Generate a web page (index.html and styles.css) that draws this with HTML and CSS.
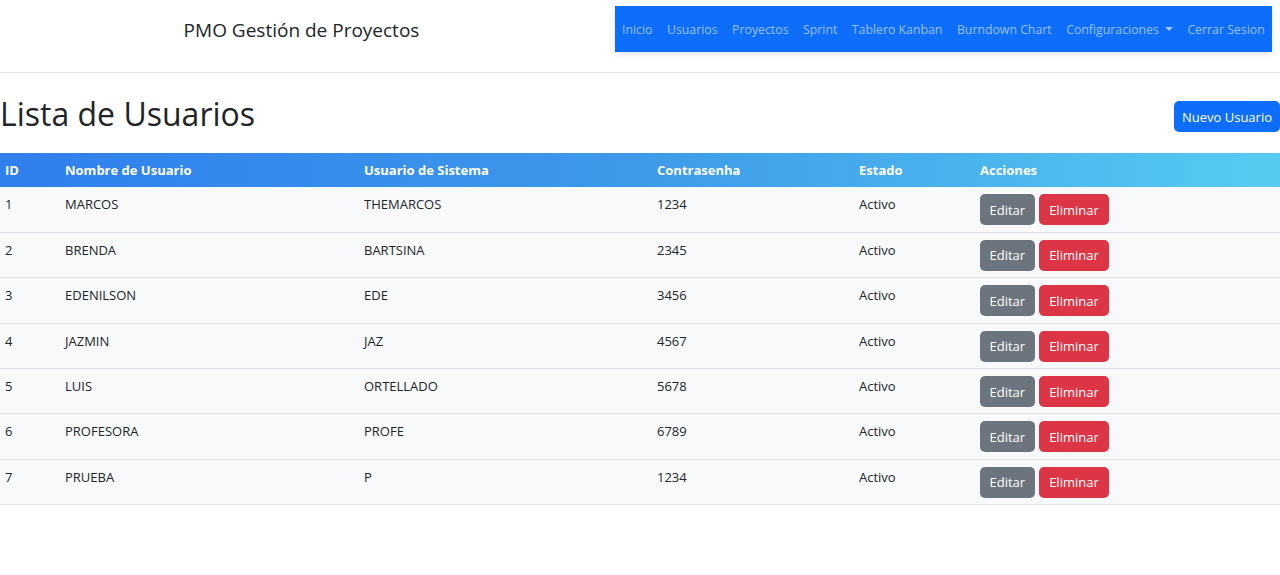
FILE: index.html
```html
<!DOCTYPE html>
<html lang="es">
<head>
<meta charset="utf-8">
<title>PMO Gestión de Proyectos</title>
<link rel="stylesheet" href="styles.css">
</head>
<body>
<header class="topbar">
  <div class="brand">PMO Gestión de Proyectos</div>
  <nav class="navbox">
    <a class="nav-link" href="#">Inicio</a>
    <a class="nav-link" href="#">Usuarios</a>
    <a class="nav-link" href="#">Proyectos</a>
    <a class="nav-link" href="#">Sprint</a>
    <a class="nav-link" href="#">Tablero Kanban</a>
    <a class="nav-link" href="#">Burndown Chart</a>
    <a class="nav-link dropdown" href="#">Configuraciones<span class="caret"></span></a>
    <a class="nav-link" href="#">Cerrar Sesion</a>
  </nav>
</header>
<main class="content">
  <div class="title-row">
    <h1 class="title">Lista de Usuarios</h1>
    <button class="btn btn-primary">Nuevo Usuario</button>
  </div>
  <table class="users">
    <colgroup>
      <col class="c-id"><col class="c-name"><col class="c-user"><col class="c-pass"><col class="c-state"><col class="c-actions">
    </colgroup>
    <thead>
      <tr><th>ID</th><th>Nombre de Usuario</th><th>Usuario de Sistema</th><th>Contrasenha</th><th>Estado</th><th>Acciones</th></tr>
    </thead>
    <tbody>
      <tr><td>1</td><td>MARCOS</td><td>THEMARCOS</td><td>1234</td><td>Activo</td><td class="actions"><button class="btn btn-gray">Editar</button><button class="btn btn-red">Eliminar</button></td></tr>
      <tr><td>2</td><td>BRENDA</td><td>BARTSINA</td><td>2345</td><td>Activo</td><td class="actions"><button class="btn btn-gray">Editar</button><button class="btn btn-red">Eliminar</button></td></tr>
      <tr><td>3</td><td>EDENILSON</td><td>EDE</td><td>3456</td><td>Activo</td><td class="actions"><button class="btn btn-gray">Editar</button><button class="btn btn-red">Eliminar</button></td></tr>
      <tr><td>4</td><td>JAZMIN</td><td>JAZ</td><td>4567</td><td>Activo</td><td class="actions"><button class="btn btn-gray">Editar</button><button class="btn btn-red">Eliminar</button></td></tr>
      <tr><td>5</td><td>LUIS</td><td>ORTELLADO</td><td>5678</td><td>Activo</td><td class="actions"><button class="btn btn-gray">Editar</button><button class="btn btn-red">Eliminar</button></td></tr>
      <tr><td>6</td><td>PROFESORA</td><td>PROFE</td><td>6789</td><td>Activo</td><td class="actions"><button class="btn btn-gray">Editar</button><button class="btn btn-red">Eliminar</button></td></tr>
      <tr><td>7</td><td>PRUEBA</td><td>P</td><td>1234</td><td>Activo</td><td class="actions"><button class="btn btn-gray">Editar</button><button class="btn btn-red">Eliminar</button></td></tr>
    </tbody>
  </table>
</main>
</body>
</html>
```
FILE: styles.css
```css
* { box-sizing: border-box; }
html, body { margin: 0; padding: 0; }
body {
  font-family: "Segoe UI", "Open Sans", "Noto Sans", sans-serif;
  color: #212529;
  background: #fff;
  font-size: 13px;
}
.topbar {
  display: flex;
  align-items: flex-start;
  height: 73px;
  border-bottom: 1px solid #e3e5e8;
}
.brand {
  width: 603px;
  text-align: center;
  font-size: 19px;
  line-height: 26px;
  padding-top: 17px;
  color: #212529;
}
.navbox {
  margin-top: 6px;
  margin-left: 12px;
  width: 657px;
  height: 46px;
  background: #0d6efd;
  display: flex;
  align-items: center;
  gap: 14.5px;
  padding: 0 6px 0 7px;
  box-shadow: 0 2px 6px rgba(0,0,0,0.12);
}
.nav-link {
  color: rgba(255,255,255,0.58);
  text-decoration: none;
  font-size: 12.3px;
  white-space: nowrap;
}
.caret {
  display: inline-block;
  margin-left: 6px;
  vertical-align: 3px;
  border-top: 4px solid rgba(255,255,255,0.6);
  border-left: 4px solid transparent;
  border-right: 4px solid transparent;
}
.title-row {
  display: flex;
  justify-content: space-between;
  align-items: flex-start;
  padding-top: 21px;
  height: 80px;
}
.title {
  margin: 0;
  font-size: 32px;
  font-weight: 500;
  line-height: 40px;
}
.btn {
  font-family: inherit;
  border: none;
  border-radius: 5px;
  color: #fff;
  cursor: pointer;
}
.btn-primary {
  background: #0d6efd;
  font-size: 13px;
  height: 31px;
  padding: 0 8px;
  margin-top: 7px;
}
.users {
  width: 100%;
  border-collapse: collapse;
  table-layout: fixed;
}
.c-id { width: 60px; }
.c-name { width: 299px; }
.c-user { width: 293px; }
.c-pass { width: 202px; }
.c-state { width: 121px; }
.users thead tr {
  background: linear-gradient(90deg, #2f7fee 0%, #3d9ae9 50%, #56ccf2 100%);
}
.users th {
  color: #fff;
  text-align: left;
  font-weight: 700;
  height: 34px;
  padding: 0 5px;
  font-size: 13px;
}
.users td {
  background: #f8f9fa;
  border-bottom: 1px solid #dee2e6;
  vertical-align: top;
  padding: 8px 5px 0;
  height: 45.4px;
}
.users td.actions { padding-top: 7px; }
.btn-gray, .btn-red {
  height: 31px;
  font-size: 13px;
  margin-right: 4px;
}
.btn-gray { background: #6c757d; padding: 0 9.5px; }
.btn-red { background: #dc3545; padding: 0 10.5px; }
```
